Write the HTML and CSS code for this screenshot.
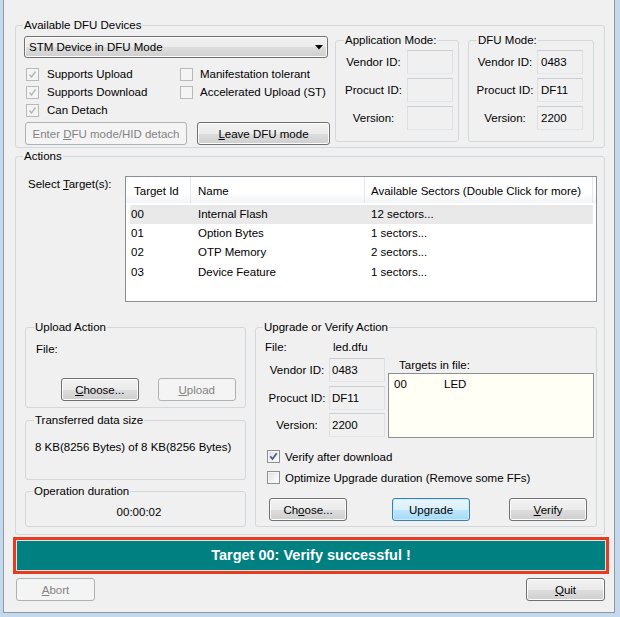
FILE: index.html
```html
<!DOCTYPE html>
<html>
<head>
<meta charset="utf-8">
<link rel="stylesheet" href="styles.css">
</head>
<body>
<div class="window">
  <fieldset class="group group-devices">
    <legend>Available DFU Devices</legend>
    <div class="devices-body">
      <div class="devices-left">
        <div class="combo"><span>STM Device in DFU Mode</span><svg class="combo-arrow" width="8" height="5" viewBox="0 0 8 5"><path d="M0 0H8L4 4.5Z" fill="#000"/></svg></div>
        <div class="checks">
          <div class="check dim"><span class="box"><svg width="11" height="11" viewBox="0 0 11 11"><path d="M2.5 5.5L4.5 8L8.5 2.5" fill="none" stroke="#b8b8b8" stroke-width="1.4"/></svg></span>Supports Upload</div>
          <div class="check dim col2"><span class="box"></span>Manifestation tolerant</div>
          <div class="check dim"><span class="box"><svg width="11" height="11" viewBox="0 0 11 11"><path d="M2.5 5.5L4.5 8L8.5 2.5" fill="none" stroke="#b8b8b8" stroke-width="1.4"/></svg></span>Supports Download</div>
          <div class="check dim col2"><span class="box"></span>Accelerated Upload (ST)</div>
          <div class="check dim"><span class="box"><svg width="11" height="11" viewBox="0 0 11 11"><path d="M2.5 5.5L4.5 8L8.5 2.5" fill="none" stroke="#b8b8b8" stroke-width="1.4"/></svg></span>Can Detach</div>
        </div>
        <div class="dev-buttons">
          <button class="btn disabled btn-enter">Enter <u>D</u>FU mode/HID detach</button>
          <button class="btn btn-leave"><u>L</u>eave DFU mode</button>
        </div>
      </div>
      <fieldset class="group mode mode-app">
        <legend>Application Mode:</legend>
        <div class="mode-grid">
          <span class="mode-label">Vendor ID:</span><span class="field"></span>
          <span class="mode-label">Procuct ID:</span><span class="field"></span>
          <span class="mode-label">Version:</span><span class="field"></span>
        </div>
      </fieldset>
      <fieldset class="group mode mode-dfu">
        <legend>DFU Mode:</legend>
        <div class="mode-grid">
          <span class="mode-label">Vendor ID:</span><span class="field">0483</span>
          <span class="mode-label">Procuct ID:</span><span class="field">DF11</span>
          <span class="mode-label">Version:</span><span class="field">2200</span>
        </div>
      </fieldset>
    </div>
  </fieldset>

  <fieldset class="group group-actions">
    <legend>Actions</legend>
    <div class="targets-row">
      <div class="select-label">Select <u>T</u>arget(s):</div>
      <div class="listview">
        <div class="lv-head">
          <div class="lv-h h1">Target Id</div>
          <div class="lv-h h2">Name</div>
          <div class="lv-h h3">Available Sectors (Double Click for more)</div>
        </div>
        <div class="lv-rows">
          <div class="lv-row selected"><span class="r1">00</span><span class="r2">Internal Flash</span><span class="r3">12 sectors...</span></div>
          <div class="lv-row"><span class="r1">01</span><span class="r2">Option Bytes</span><span class="r3">1 sectors...</span></div>
          <div class="lv-row"><span class="r1">02</span><span class="r2">OTP Memory</span><span class="r3">2 sectors...</span></div>
          <div class="lv-row"><span class="r1">03</span><span class="r2">Device Feature</span><span class="r3">1 sectors...</span></div>
        </div>
      </div>
    </div>

    <div class="lower">
      <div class="lower-left">
        <fieldset class="group upload">
          <legend>Upload Action</legend>
          <div class="file-label">File:</div>
          <div class="upload-buttons">
            <button class="btn btn-78"><u>C</u>hoose...</button>
            <button class="btn btn-79 disabled"><u>U</u>pload</button>
          </div>
        </fieldset>
        <fieldset class="group transferred">
          <legend>Transferred data size</legend>
          <div class="transfer-text">8 KB(8256 Bytes) of 8 KB(8256 Bytes)</div>
        </fieldset>
        <fieldset class="group duration">
          <legend>Operation duration</legend>
          <div class="duration-text">00:00:02</div>
        </fieldset>
      </div>

      <fieldset class="group upgrade">
        <legend>Upgrade or Verify Action</legend>
        <div class="file-row"><span class="file-key">File:</span><span>led.dfu</span></div>
        <div class="upgrade-grid">
          <div class="ids">
            <span class="id-label">Vendor ID:</span><span class="field field-up">0483</span>
            <span class="id-label">Procuct ID:</span><span class="field field-up">DF11</span>
            <span class="id-label">Version:</span><span class="field field-up">2200</span>
          </div>
          <div class="targets-file">
            <div class="targets-label">Targets in file:</div>
            <div class="listbox"><div class="lb-row"><span class="lb1">00</span><span>LED</span></div></div>
          </div>
        </div>
        <div class="up-checks">
          <div class="check on"><span class="box"><svg width="11" height="11" viewBox="0 0 11 11"><path d="M2.3 5.3L4.5 8L8.7 2.3" fill="none" stroke="#4a5f97" stroke-width="1.8"/></svg></span>Verify after download</div>
          <div class="check on"><span class="box"></span>Optimize Upgrade duration (Remove some FFs)</div>
        </div>
        <div class="up-buttons">
          <button class="btn btn-78 b-choose">Ch<u>o</u>ose...</button>
          <button class="btn btn-78 default b-upgrade">Upgrade</button>
          <button class="btn btn-78 b-verify"><u>V</u>erify</button>
        </div>
      </fieldset>
    </div>
  </fieldset>

  <div class="status-frame">
    <div class="status">Target 00: Verify successful !</div>
  </div>

  <div class="bottom-buttons">
    <button class="btn btn-79 disabled"><u>A</u>bort</button>
    <button class="btn btn-79"><u>Q</u>uit</button>
  </div>
</div>
</body>
</html>
```

FILE: styles.css
```css
* { box-sizing: border-box; }
html, body { margin: 0; padding: 0; }
body {
  width: 620px;
  height: 617px;
  overflow: hidden;
  background: #c4d8ee;
  font-family: "Liberation Sans", Arial, sans-serif;
  font-size: 11.5px;
  line-height: 14px;
  color: #000;
}
u { text-decoration: underline; text-underline-offset: 1px; }

.window {
  margin-left: 3px;
  width: 612px;
  height: 613px;
  background: #f0f0f0;
  border-left: 1px solid #8d99a5;
  border-right: 1px solid #8d99a5;
  border-bottom: 1px solid #8d99a5;
  padding-top: 18px;
}

/* group boxes */
.group {
  margin: 0;
  min-width: 0;
  border: 1px solid #d3d8dc;
  border-radius: 3px;
}
.group > legend {
  padding: 0 1px;
  line-height: 14px;
}

.group-devices {
  margin-left: 11px;
  width: 590px;
  padding: 1px 10px 2px 8px;
}
.group-devices > legend { margin-left: -1px; }
.devices-body { display: flex; align-items: flex-start; }
.devices-left { width: 306px; padding-top: 3px; }

.combo {
  width: 304px;
  height: 22px;
  border: 1px solid #707070;
  border-radius: 3px;
  background: linear-gradient(#f2f2f2 0%, #ebebeb 50%, #dddddd 51%, #cfcfcf 100%);
  box-shadow: inset 0 0 0 1px #fbfbfb;
  display: flex;
  align-items: center;
  padding-left: 4px;
}
.combo-arrow { margin-left: auto; margin-right: 4px; }

.checks {
  margin-top: 7px;
  display: grid;
  grid-template-columns: 156px 1fr;
  grid-auto-rows: 18px;
}
.check { display: flex; align-items: center; gap: 8px; }
.check .box {
  width: 13px;
  height: 13px;
  margin-left: 2px;
  border: 1px solid #b9b9b9;
  background: #f4f4f4;
  display: flex;
  align-items: center;
  justify-content: center;
}
.check.col2 .box { margin-left: 0; gap: 7px; }
.check.col2 { gap: 7px; }
.check.on .box {
  border-color: #8e8f8f;
  background: linear-gradient(135deg, #dcdcdc 0%, #f0f0f0 50%, #ffffff 100%);
  box-shadow: inset 0 0 0 1px #f4f4f4;
}

.dev-buttons { margin-top: 3px; display: flex; }
.btn {
  height: 23px;
  border: 1px solid #707070;
  border-radius: 3px;
  background: linear-gradient(#f2f2f2 0%, #ebebeb 50%, #dddddd 51%, #cfcfcf 100%);
  box-shadow: inset 0 0 0 1px #fcfcfc;
  font-family: inherit;
  font-size: 11.5px;
  line-height: 14px;
  color: #000;
  padding: 0;
  margin: 0;
  text-align: center;
}
.btn.disabled {
  background: #f4f4f4;
  border-color: #adb2b5;
  box-shadow: none;
  color: #838383;
}
.btn.default {
  border-color: #3c7fb1;
  background: linear-gradient(#eaf6fd 0%, #d9f0fc 50%, #bee6fd 51%, #a7d9f5 100%);
  box-shadow: inset 0 0 0 1px #c9ecfd;
}
.btn-enter { margin-left: 1px; width: 162px; }
.btn-leave { margin-left: 10px; width: 133px; }
.btn-78 { width: 78px; }
.btn-79 { width: 79px; }

/* mode boxes */
.mode { padding: 3px 5px 11px 4px; }
.mode > legend { margin-left: 4px; }
.mode-app { width: 124px; margin-left: 5px; }
.mode-dfu { width: 126px; margin-left: 9px; padding-right: 10px; }
.mode-grid {
  display: grid;
  grid-template-columns: 1fr 46px;
  grid-auto-rows: 24px;
  row-gap: 4px;
}
.mode-label { text-align: center; align-self: center; }
.field {
  display: block;
  height: 24px;
  line-height: 22px;
  padding-left: 3px;
  border: 1px solid;
  border-color: #c9ced3 #dcdfe3 #e2e5e8 #dcdfe3;
  background: #f0f0f0;
}

/* actions */
.group-actions {
  margin-top: 1px;
  margin-left: 11px;
  width: 590px;
  padding: 13px 7px 7px 9px;
}
.group-actions > legend { margin-left: -2px; }
.targets-row { display: flex; align-items: flex-start; }
.select-label { width: 100px; padding-left: 3px; padding-top: 1px; }
.listview {
  width: 472px;
  height: 126px;
  border: 1px solid #8b8f96;
  background: #fff;
}
.lv-head {
  display: flex;
  height: 26px;
  background: linear-gradient(#ffffff 0%, #ffffff 60%, #f3f4f6 100%);
}
.lv-h {
  border-right: 1px solid #e3e6ea;
  line-height: 26px;
  padding-top: 1px;
  white-space: nowrap;
}
.h1 { width: 65px; padding-left: 8px; }
.h2 { width: 174px; padding-left: 7px; }
.h3 { width: 228px; padding-left: 6px; }
.lv-rows { padding-top: 2px; margin-left: 4px; width: 463px; }
.lv-row { display: flex; height: 19.2px; line-height: 19.2px; white-space: nowrap; }
.lv-row.selected { background: #e9e9e9; }
.r1 { width: 61px; padding-left: 1px; }
.r2 { width: 174px; padding-left: 7px; }
.r3 { padding-left: 6px; }

.lower { margin-top: 18px; display: flex; align-items: flex-start; }
.lower-left { width: 221px; }

.upload { padding: 8px 9px 6px 10px; }
.upload > legend { margin-left: -2px; }
.upload-buttons { margin-top: 22px; padding-left: 25px; display: flex; gap: 19px; }

.transferred { margin-top: 5px; padding: 13px 9px 25px 9px; }
.transferred > legend { margin-left: -1px; }

.duration { margin-top: 4px; padding: 7px 9px 7px 16px; }
.duration > legend { margin-left: -9px; }
.duration-text { text-align: center; }

.upgrade { margin-left: 9px; width: 343px; padding: 6px 2px 5px 9px; }
.upgrade > legend { margin-left: -2px; }
.file-row { display: flex; }
.file-key { width: 68px; }
.upgrade-grid { margin-top: 4px; display: flex; align-items: flex-start; }
.ids {
  display: grid;
  grid-template-columns: 64px 56px;
  grid-auto-rows: 24px;
  row-gap: 3.5px;
}
.id-label { text-align: center; align-self: center; }
.field-up { padding-left: 2px; }
.targets-file { margin-left: 3px; width: 207px; }
.targets-label { padding-left: 11px; margin-bottom: 1px; }
.listbox {
  height: 65px;
  border: 1px solid #8b8f96;
  background: #fffff5;
  padding: 3px 0 0 5px;
}
.lb-row { display: flex; }
.lb1 { width: 50px; }

.up-checks { margin-top: 8px; }
.up-checks .check { height: 21px; gap: 5px; }
.up-buttons { margin-top: 10px; display: flex; }
.b-choose { margin-left: 4px; }
.b-upgrade { margin-left: 45px; }
.b-verify { margin-left: 39px; }

/* status */
.status-frame {
  margin-top: 2px;
  margin-left: 9px;
  width: 596px;
  height: 37px;
  border: 3px solid #ea3b1f;
}
.status {
  height: 100%;
  border: 1px solid #d6e6e6;
  background: #008080;
  color: #fff;
  font-weight: bold;
  font-size: 14.5px;
  line-height: 29px;
  text-align: center;
}

.bottom-buttons {
  margin-top: 4px;
  margin-left: 12px;
  width: 589px;
  display: flex;
  justify-content: space-between;
}
```
